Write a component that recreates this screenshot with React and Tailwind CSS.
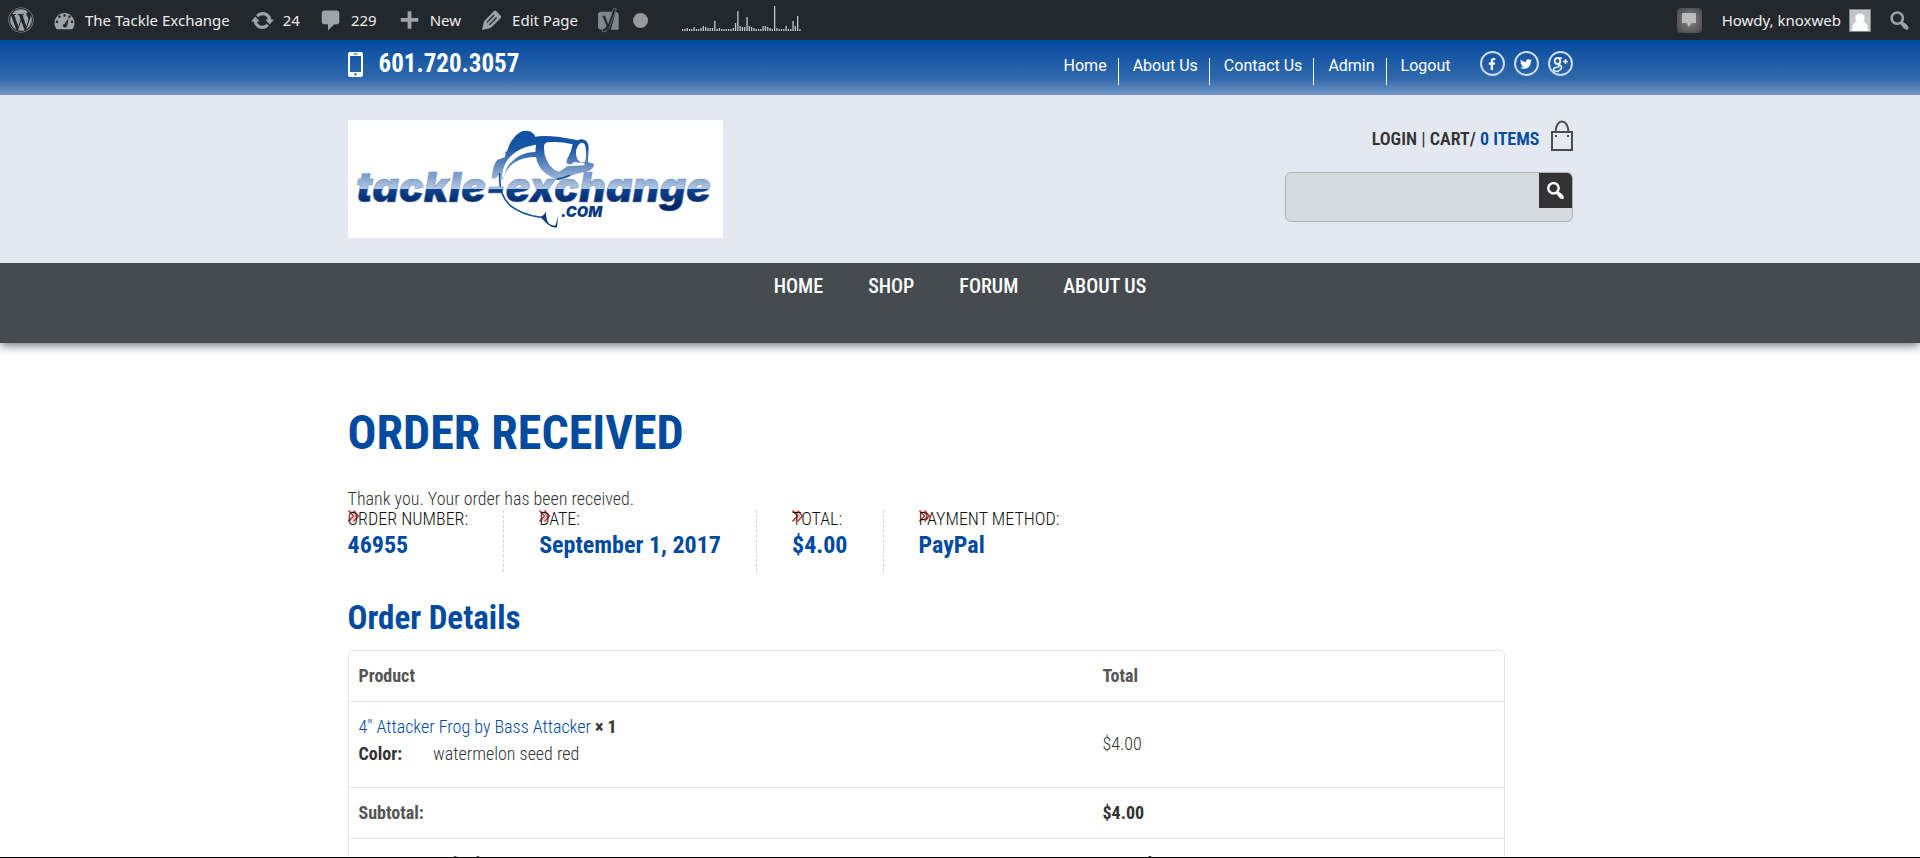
import React from "react";
import { FaFacebookF, FaTwitter, FaWordpress } from "react-icons/fa";

const adminItem = "flex items-center gap-2 text-[#eee]";

function WordPressIcon() {
  return <FaWordpress className="size-[26px] text-[#9ea3a8]" aria-hidden="true" />;
}

function DashboardIcon() {
  return (
    <svg viewBox="0 0 20 20" className="size-[25px] fill-[#9ea3a8]" aria-hidden="true">
      <path d="M3.76 17h12.48c1.100-1.370 1.760-3.110 1.760-5 0-4.420-3.580-8-8-8s-8 3.580-8 8c0 1.890.660 3.630 1.760 5zM10 5c.550 0 1 .450 1 1s-.450 1-1 1-1-.450-1-1 .450-1 1-1zM6 6c.550 0 1 .450 1 1s-.450 1-1 1-1-.450-1-1 .450-1 1-1zM14 6c.550 0 1 .450 1 1s-.450 1-1 1-1-.450-1-1 .450-1 1-1zM9.630 13.240l3.790-5.370-1.310 6.390-.002.001c-.090.450-.360.870-.790 1.120-.830.480-1.890.200-2.370-.630-.380-.660-.280-1.460.200-2.010zM4 10c.550 0 1 .450 1 1s-.450 1-1 1-1-.450-1-1 .450-1 1-1zM16 10c.550 0 1 .450 1 1s-.450 1-1 1-1-.450-1-1 .450-1 1-1z" />
    </svg>
  );
}

function UpdateIcon() {
  return (
    <svg viewBox="0 0 20 20" className="size-[25px] fill-[#9ea3a8]" aria-hidden="true">
      <path d="M10.200 3.280c3.530 0 6.430 2.610 6.920 6h2.080l-3.500 4-3.500-4h2.320c-.450-1.970-2.210-3.450-4.320-3.450-1.450 0-2.730.710-3.540 1.780L4.950 5.660C6.230 4.200 8.110 3.280 10.200 3.280zm-.400 13.440c-3.520 0-6.430-2.610-6.920-6H.800l3.500-4c1.170 1.330 2.330 2.670 3.500 4H5.480c.450 1.970 2.210 3.450 4.320 3.450 1.450 0 2.730-.710 3.540-1.780l1.710 1.950c-1.280 1.460-3.150 2.380-5.250 2.380z" />
    </svg>
  );
}

function CommentIcon() {
  return (
    <svg viewBox="0 0 20 20" className="size-[25px] fill-[#9ea3a8]" aria-hidden="true">
      <path d="M5 2h10q2 0 2 2v7q0 2-2 2h-2l-5 5v-5H5q-2 0-2-2V4q0-2 2-2z" />
    </svg>
  );
}

function PlusIcon() {
  return (
    <svg viewBox="0 0 20 20" className="size-[25px] fill-[#9ea3a8]" aria-hidden="true">
      <path d="M17 8v3h-5.500v5.500h-3V11H3V8h5.500V2.500h3V8z" />
    </svg>
  );
}

function PencilIcon() {
  return (
    <svg viewBox="0 0 20 20" className="size-[25px] fill-[#9ea3a8]" aria-hidden="true">
      <path d="M13.5 2.200l3.900 3.900q.8 1 0 1.900l-8 8-7 1.500L4 10.600l8-8.200q.8-.8 1.500-.2z" />
      <path d="M6.300 11.500l5.800-5.900M8.300 13.500l5.800-5.900" stroke="#23282d" strokeWidth="1.100" />
    </svg>
  );
}

function SearchIcon({ className }) {
  return (
    <svg viewBox="0 0 20 20" className={className} aria-hidden="true">
      <path d="M12.140 4.180c1.870 1.870 2.110 4.750.720 6.890.120.100.220.210.360.310.200.160.470.360.810.590.340.240.560.390.660.470.420.310.730.570.940.780.320.320.600.650.840 1 .250.350.440.690.590 1.040.140.350.210.680.180 1-.020.320-.140.590-.360.810s-.490.340-.810.360c-.310.020-.650-.040-.990-.190-.350-.140-.700-.340-1.040-.590-.350-.240-.680-.520-1-.840-.210-.210-.470-.520-.770-.930-.100-.130-.250-.350-.470-.660-.220-.320-.400-.570-.560-.780-.160-.200-.290-.350-.440-.500-2.070 1.090-4.690.760-6.440-.980-2.140-2.150-2.140-5.640 0-7.780 2.150-2.150 5.630-2.150 7.780 0zm-1.410 6.360c1.360-1.370 1.360-3.580 0-4.950-1.370-1.370-3.590-1.370-4.950 0-1.370 1.370-1.370 3.580 0 4.950 1.360 1.370 3.580 1.370 4.950 0z" />
    </svg>
  );
}

function YoastIcon() {
  return (
    <svg viewBox="0 0 64 76" className="h-[25px] w-[21px]" aria-hidden="true">
      <path d="M10 11h36L30 66H10Q0 66 0 56V21Q0 11 10 11zM54 11Q63 13 63 22V66H39z" fill="#82878c" />
      <path d="M47 2h9L36 56Q30 71 14 73V64Q24 62 25 54L12 23h10l9 24z" fill="#23282d" stroke="#82878c" strokeWidth="2" />
    </svg>
  );
}

const views = [2, 2, 3, 2, 2, 4, 2, 2, 3, 5, 4, 3, 3, 3, 10, 2, 3, 2, 2, 2, 2, 2, 3, 8, 20, 5, 4, 4, 14, 5, 4, 3, 2, 2, 2, 5, 5, 4, 3, 2, 25, 3, 2, 2, 2, 5, 2, 2, 10, 5, 15, 2];

function ViewsChart() {
  return (
    <svg viewBox="0 0 120 26" className="h-[26px] w-[120px]" role="img" aria-label="Page views">
      {views.map((v, i) => (
        <rect key={i} x={i * 2.3} y={26 - v} width="1.300" height={v} fill="#c4c6c8" />
      ))}
    </svg>
  );
}

function AdminBar() {
  return (
    <header className="flex h-10 shrink-0 items-center justify-between bg-[#23282d] px-2 font-['Noto_Sans','Open_Sans',sans-serif] text-[15px] leading-10">
      <div className="flex items-center">
        <a href="#wp" aria-label="About WordPress" className="mr-[18px]"><WordPressIcon /></a>
        <a href="#site" className={adminItem + " mr-5"}><DashboardIcon /><span>The Tackle Exchange</span></a>
        <a href="#updates" className={adminItem + " mr-[18px]"}><UpdateIcon /><span>24</span></a>
        <a href="#comments" className={adminItem + " mr-5"}><CommentIcon /><span>229</span></a>
        <a href="#new" className={adminItem + " mr-[18px]"}><PlusIcon /><span>New</span></a>
        <a href="#edit" className={adminItem + " mr-5"}><PencilIcon /><span>Edit Page</span></a>
        <a href="#seo" aria-label="SEO" className="mr-[14px] flex items-center gap-[14px]">
          <YoastIcon />
          <span className="size-[15px] rounded-full bg-[#999]" />
        </a>
        <a href="#stats" className="mb-1 ml-5"><ViewsChart /></a>
      </div>
      <div className="flex items-center">
        <a href="#notes" aria-label="Notifications" className="mr-5 flex size-[25px] items-center justify-center rounded-sm bg-radial from-[#888] to-[#444]">
          <svg viewBox="0 0 14 14" className="size-[14px] fill-[#bbb]" aria-hidden="true"><path d="M0 1q0-1 1-1h12q1 0 1 1v9h-4.500L7 14l-2.500-4H0z" /></svg>
        </a>
        <a href="#profile" className={adminItem}>
          <span>Howdy, knoxweb</span>
          <svg viewBox="0 0 22 23" className="h-[23px] w-[22px]" aria-hidden="true">
            <rect x="0.500" y="0.500" width="21" height="22" fill="#c5c5c5" stroke="#82878c" />
            <circle cx="11" cy="9" r="4.600" fill="#fff" />
            <path d="M3 22c0-6 2-9 5-9.500h6c3 .500 5 3.500 5 9.500z" fill="#fff" />
          </svg>
        </a>
        <button type="button" aria-label="Search" className="ml-4"><SearchIcon className="size-[25px] fill-[#9ea3a8]" /></button>
      </div>
    </header>
  );
}

const topLinks = ["Home", "About Us", "Contact Us", "Admin", "Logout"];

function TopBar() {
  return (
    <div className="h-[55px] shrink-0 bg-linear-to-b from-[#004a9f] via-[#2f69ab] via-70% to-[#7294c4]">
      <div className="mx-auto flex max-w-[1225px] justify-between">
        <a href="tel:6017203057" className="flex items-start gap-4 pt-[7px] text-[25px] leading-[34px] font-bold text-white">
          <svg viewBox="0 0 15 25" className="mt-[5px] h-[25px] w-[15px]" aria-hidden="true">
            <path fillRule="evenodd" fill="#fff" d="M2 0h11q2 0 2 2v21q0 2-2 2H2q-2 0-2-2V2q0-2 2-2zM2 4v16h11V4zM5.500 1.500v1h4v-1zM7.500 21a1.300 1.300 0 1 0 .010 0z" />
          </svg>
          <span>601.720.3057</span>
        </a>
        <div className="flex items-start">
          <nav aria-label="Account" className="mt-[18px] flex font-['Roboto',sans-serif] text-base text-white">
            {topLinks.map((t) => (
              <a key={t} href={"#" + t} className="h-[27px] border-r border-white pr-[11px] pl-[14px] leading-4 last:border-0">{t}</a>
            ))}
          </nav>
          <div className="mt-[11px] ml-[18px] flex gap-[9px] text-white">
            <a href="#facebook" aria-label="Facebook" className="flex size-[25px] items-center justify-center rounded-full border-2 border-[#cfdcec]"><FaFacebookF className="size-3" /></a>
            <a href="#twitter" aria-label="Twitter" className="flex size-[25px] items-center justify-center rounded-full border-2 border-[#cfdcec]"><FaTwitter className="size-3" /></a>
            <a href="#google" aria-label="Google Plus">
              <svg viewBox="0 0 25 25" className="size-[25px]" fill="none" stroke="#e8eff7" aria-hidden="true">
                <circle cx="12.500" cy="12.500" r="11.500" strokeWidth="2" stroke="#cfdcec" />
                <ellipse cx="9.500" cy="10" rx="2.800" ry="3" strokeWidth="1.800" />
                <path d="M9 7h5M11 13q3 2 2.500 4T9.500 20.500q-4 0-4-2t4.500-2.500q2-.500 0-2.500M17.500 8v5M15 10.500h5" strokeWidth="1.500" />
              </svg>
            </a>
          </div>
        </div>
      </div>
    </div>
  );
}

function Logo() {
  return (
    <svg viewBox="24 30 1125 354" className="h-[118px] w-[375px] bg-white" role="img" aria-label="tackle-exchange.com">
      <defs>
        <linearGradient id="fish" gradientUnits="userSpaceOnUse" x1="0" y1="60" x2="0" y2="215">
          <stop offset="0" stopColor="#0d51a5" />
          <stop offset="0.350" stopColor="#1956a5" />
          <stop offset="1" stopColor="#a9bfdc" />
        </linearGradient>
        <linearGradient id="word" gradientUnits="userSpaceOnUse" x1="0" y1="200" x2="0" y2="290">
          <stop offset="0" stopColor="#7fa0cc" />
          <stop offset="0.400" stopColor="#b5c8e2" />
          <stop offset="0.410" stopColor="#0d4390" />
          <stop offset="1" stopColor="#04255f" />
        </linearGradient>
      </defs>
      <path fill="url(#fish)" fillRule="evenodd" d="M455 206Q458 165 472 150L494 142Q497 136 496 127L502 122L508 104Q520 80 541 66Q556 59 570 64Q582 70 586 80Q630 73 714 91Q722 85 734 90Q745 96 746 112L744 156L762 162Q762 178 744 184L708 192Q684 200 662 212Q628 204 606 180Q592 165 588 141Q550 140 520 160Q496 180 489 210Q478 206 478 192L468 205ZM612 108Q610 150 640 177Q650 186 660 184L682 169L734 166L733 160L702 156Q694 168 680 160Q678 150 686 138Q694 124 698 103Q660 94 624 97Q614 98 612 108ZM722 99Q708 108 708 130Q708 150 724 158L735 156Q742 130 735 105Q730 96 722 99Z" />
      <path fill="#fff" d="M488 184Q500 130 560 110L588 104L586 126Q530 128 500 174L489 207Q485 197 488 184Z" />
      <path fill="none" stroke="#17519b" strokeWidth="5" d="M479 190Q476 255 510 286Q545 314 602 322M650 208Q672 204 690 196" />
      <path fill="#0b3c82" d="M600 320Q615 316 618 302Q617 330 628 342Q643 350 647 345L655 317L651 352Q638 355 622 342Z" />
      <text x="48" y="276" fill="url(#word)" stroke="#6e8fba" strokeWidth="1.500" fontSize="124" fontWeight="900" fontStyle="italic" fontFamily="Inter, sans-serif">tackle-exchange</text>
      <text x="663" y="320" fill="#0a3b80" fontSize="44" fontWeight="900" fontStyle="italic" fontFamily="Inter, sans-serif">.COM</text>
    </svg>
  );
}

function SiteHeader() {
  return (
    <div className="relative z-10 shrink-0 bg-[#e4e9f1] pb-[25px]">
      <div className="mx-auto flex max-w-[1225px] items-start justify-between pt-[25px]">
        <a href="#home"><Logo /></a>
        <div className="flex w-72 flex-col items-end">
          <div className="flex items-end gap-[11px] text-lg leading-6 font-semibold whitespace-nowrap text-[#333]">
            <p><a href="#login">LOGIN</a> <span className="font-normal">|</span> <a href="#cart">CART/ <span className="text-[#004a9f]">0 ITEMS</span></a></p>
            <svg viewBox="0 0 22 31" className="h-[31px] w-[22px]" fill="none" stroke="#4a4d50" strokeWidth="2" aria-hidden="true">
              <path d="M1 12h20v18H1zM4.500 12C5 -2 17 -2 17.500 12" />
              <path d="M4 16h2M16 16h2" />
            </svg>
          </div>
          <form role="search" className="mt-[21px] flex h-[50px] w-full overflow-hidden rounded-md border border-[#aeb1b3] bg-[#d6dbdf]">
            <input type="search" aria-label="Search products" className="min-w-0 flex-1 bg-transparent px-3 outline-none" />
            <button type="button" aria-label="Search" className="flex h-[35px] w-[33px] items-center justify-center bg-[#333]">
              <SearchIcon className="size-[23px] fill-white" />
            </button>
          </form>
        </div>
      </div>
    </div>
  );
}

function MainNav() {
  return (
    <nav aria-label="Main" className="flex h-20 shrink-0 justify-center gap-[45px] bg-[#464b4f] pt-[9px] text-xl leading-7 font-medium text-white shadow-[0_2px_10px_rgba(0,0,0,0.6)]">
      {["HOME", "SHOP", "FORUM", "ABOUT US"].map((t) => <a key={t} href={"#" + t}>{t}</a>)}
    </nav>
  );
}

const summary = [
  ["ORDER NUMBER:", "46955"],
  ["DATE:", "September 1, 2017"],
  ["TOTAL:", "$4.00"],
  ["PAYMENT METHOD:", "PayPal"],
];

function DoubleChevron() {
  return (
    <svg viewBox="0 0 12 12" className="absolute top-0 left-0 size-3" fill="none" stroke="#c23b3b" strokeWidth="1.600" aria-hidden="true">
      <path d="M.5 .500l5 5.500-5 5.500M5.500 .500l5 5.500-5 5.500" />
      <path d="M3 .500L8 6l-5 5.500" strokeWidth=".8" opacity=".7" />
    </svg>
  );
}

function Order() {
  return (
    <main className="mx-auto w-full max-w-[1225px] pt-[60px] text-lg leading-5 font-light text-[#333]">
      <h1 className="text-5xl leading-[60px] font-bold text-[#004a9f]">ORDER RECEIVED</h1>
      <p className="mt-[26px]">Thank you. Your order has been received.</p>
      <ul className="mt-px flex">
        {summary.map(([k, v]) => (
          <li key={k} className="relative mr-[35px] h-[62px] border-r border-dashed border-[#d3ced2] pr-[35px] text-[#111] last:border-0">
            <DoubleChevron />
            <span className="relative block leading-[18px]">{k}</span>
            <strong className="block text-2xl leading-[34px] font-bold text-[#004a9f]">{v}</strong>
          </li>
        ))}
      </ul>
      <h2 className="mt-[26px] text-[33px] leading-10 font-bold text-[#004a9f]">Order Details</h2>
      <div className="mt-3 w-[1157px] max-w-full rounded-md border border-[#e4e4e4]">
        <table className="w-full table-fixed border-collapse text-left [&_td]:px-[10px] [&_th]:px-[10px] [&_th]:font-bold [&_tr+tr]:border-t [&_tr+tr]:border-[#e4e4e4]">
          <colgroup><col className="w-[744px]" /><col /></colgroup>
          <tbody>
            <tr className="h-[50px] text-[#555]"><th scope="col">Product</th><th scope="col">Total</th></tr>
            <tr className="h-[86px]">
              <td className="pb-2">
                <div className="leading-[27px]"><a href="#product" className="text-[#004a9f]">4" Attacker Frog by Bass Attacker</a> <strong className="font-bold">× 1</strong></div>
                <dl className="flex gap-[31px] leading-[27px]"><dt className="font-bold">Color:</dt><dd>watermelon seed red</dd></dl>
              </td>
              <td>$4.00</td>
            </tr>
            <tr className="h-[51px]"><th scope="row" className="text-[#555]">Subtotal:</th><td className="font-bold">$4.00</td></tr>
            <tr className="h-[51px]"><th scope="row" className="text-[#555]">Payment Method:</th><td className="font-bold">PayPal</td></tr>
          </tbody>
        </table>
      </div>
    </main>
  );
}

export default function App() {
  return (
    <div className="flex h-screen flex-col overflow-hidden border-b border-black bg-white font-['Roboto_Condensed','Roboto',sans-serif]">
      <AdminBar />
      <TopBar />
      <SiteHeader />
      <MainNav />
      <Order />
    </div>
  );
}
